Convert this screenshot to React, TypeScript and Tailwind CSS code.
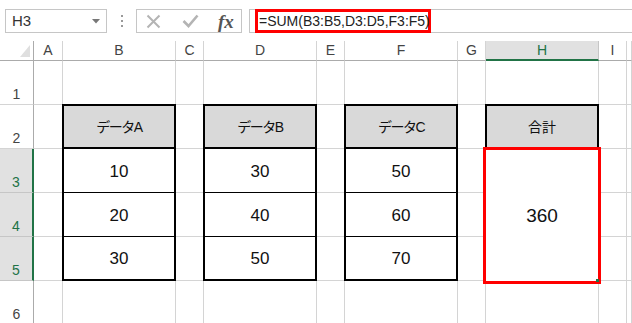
import React from 'react';

const colStart = ['col-start-1', 'col-start-2', 'col-start-3', 'col-start-4', 'col-start-5', 'col-start-6', 'col-start-7', 'col-start-8', 'col-start-9', 'col-start-10', 'col-start-11'];
const rowStart = ['row-start-1', 'row-start-2', 'row-start-3', 'row-start-4', 'row-start-5', 'row-start-6', 'row-start-7'];
const letters = ['', 'A', 'B', 'C', 'D', 'E', 'F', 'G', 'H', 'I', ''];

const tables = [
  { col: 'col-start-3', title: 'データA', values: ['10', '20', '30'] },
  { col: 'col-start-5', title: 'データB', values: ['30', '40', '50'] },
  { col: 'col-start-7', title: 'データC', values: ['50', '60', '70'] },
];

function FormulaBar() {
  return (
    <div className="flex h-[41px] items-start pt-[9px]">
      {/* Name box */}
      <div className="ml-[5px] flex h-[24px] w-[102px] items-center justify-between border border-[#c6c6c6] pl-[6px] pr-[6px]">
        <span className="text-[15px] text-[#333]">H3</span>
        <svg width="8" height="5" viewBox="0 0 8 5">
          <path d="M0 0 L8 0 L4 4.5 Z" fill="#777" />
        </svg>
      </div>
      {/* dots */}
      <div className="ml-[14px] mt-[6px] flex flex-col gap-[3px]">
        <span className="block h-[2px] w-[2px] bg-[#999]" />
        <span className="block h-[2px] w-[2px] bg-[#999]" />
        <span className="block h-[2px] w-[2px] bg-[#999]" />
      </div>
      {/* cancel / enter / fx */}
      <div className="ml-[13px] flex h-[24px] w-[106px] items-center border border-[#c6c6c6]">
        <svg className="ml-[9px]" width="15" height="15" viewBox="0 0 15 15">
          <path d="M1.5 1.5 L13.5 13.5 M13.5 1.5 L1.5 13.5" stroke="#b4b4b4" strokeWidth="2" />
        </svg>
        <svg className="ml-[21px]" width="17" height="14" viewBox="0 0 17 14">
          <path d="M1.5 7 L6.5 12 L15.5 1.5" stroke="#b4b4b4" strokeWidth="2.6" fill="none" />
        </svg>
        <span className="ml-[19px] font-['Liberation_Serif',serif] text-[19px] font-bold italic leading-none text-[#555]">fx</span>
      </div>
      {/* formula input */}
      <div className="ml-[7px] flex h-[24px] flex-1 items-center border-y border-l border-[#c6c6c6]">
        <div className="-my-px ml-[5px] flex h-[24px] w-[176px] items-center border-[3px] border-[#ff0000] pl-[1px]">
          <span className="whitespace-nowrap text-[14px] text-[#222]">=SUM(B3:B5,D3:D5,F3:F5)</span>
        </div>
      </div>
    </div>
  );
}

function Cell({ r, c }: { r: number; c: number }) {
  const pos = `${colStart[c]} ${rowStart[r]}`;
  if (r === 0 && c === 0) {
    return (
      <div className={`${pos} relative border-b border-r border-[#ababab]`}>
        <svg className="absolute left-[20px] top-[4px]" width="11" height="13" viewBox="0 0 11 13">
          <path d="M10 0 L10 12 L0 12 Z" fill="#dfdfdf" />
        </svg>
      </div>
    );
  }
  if (r === 0) {
    const selected = c === 8;
    return (
      <div
        className={`${pos} flex items-center justify-center border-r text-[14px] ${
          selected
            ? 'border-b-2 border-r-[#c6c6c6] border-b-[#217346] bg-[#e1e1e1] text-[#217346]'
            : 'border-b border-r-[#d4d4d4] border-b-[#ababab] text-[#444]'
        }`}
      >
        {letters[c]}
      </div>
    );
  }
  if (c === 0) {
    const selected = r >= 3 && r <= 5;
    return (
      <div
        className={`${pos} flex items-end justify-center border-b pb-[1px] text-[14px] leading-[18px] ${
          selected
            ? 'border-r-2 border-b-[#c6c6c6] border-r-[#217346] bg-[#e1e1e1] text-[#217346]'
            : 'border-r border-b-[#d4d4d4] border-r-[#ababab] text-[#444]'
        }`}
      >
        {r}
      </div>
    );
  }
  return <div className={`${pos} border-b border-r border-[#d4d4d4]`} />;
}

function DataTable({ col, title, values }: { col: string; title: string; values: string[] }) {
  return (
    <div className={`${col} row-start-3 row-span-4 -ml-px -mt-px flex flex-col border-2 border-black bg-white`}>
      <div className="flex h-[43px] items-center justify-center border-b-2 border-black bg-[#d9d9d9] pt-[2px] text-[14px] tracking-[-1.5px] text-[#111]">
        {title}
      </div>
      <div className="flex h-[44px] items-center justify-center border-b border-black pt-[2px] text-[17px] text-[#111]">
        {values[0]}
      </div>
      <div className="flex h-[44px] items-center justify-center border-b border-black pt-[2px] text-[17px] text-[#111]">
        {values[1]}
      </div>
      <div className="flex flex-1 items-center justify-center pt-[2px] text-[17px] text-[#111]">{values[2]}</div>
    </div>
  );
}

export default function App() {
  const cells: React.ReactNode[] = [];
  for (let r = 0; r < 7; r++) {
    for (let c = 0; c < 11; c++) {
      cells.push(<Cell key={`${r}-${c}`} r={r} c={c} />);
    }
  }

  return (
    <div className="h-[323px] w-[632px] overflow-hidden bg-white font-['Liberation_Sans','Noto_Sans_CJK_JP',sans-serif]">
      <FormulaBar />

      {/* Sheet */}
      <div className="grid grid-cols-[34px_29px_113px_28px_113px_28px_113px_28px_113px_28px_1fr] grid-rows-[20px_44px_44px_44px_44px_44px_44px]">
        {cells}

        {tables.map((t) => (
          <DataTable key={t.title} col={t.col} title={t.title} values={t.values} />
        ))}

        {/* 合計 header */}
        <div className="col-start-9 row-start-3 -ml-px -mt-px flex items-center justify-center border-2 border-black bg-[#d9d9d9] pt-[2px] text-[14px] text-[#111]">
          合計
        </div>

        {/* Selected merged total cell */}
        <div className="relative col-start-9 row-start-4 row-span-3 -mb-[3px] -ml-[3px] -mr-[2px] -mt-[2px] flex items-center justify-center border-[3px] border-[#ff0000] bg-white pt-[2px] text-[19px] text-[#111]">
          360
          <span className="absolute bottom-[-1px] right-[-1px] block h-[3px] w-[3px] bg-[#217346]" />
        </div>
      </div>
    </div>
  );
}
